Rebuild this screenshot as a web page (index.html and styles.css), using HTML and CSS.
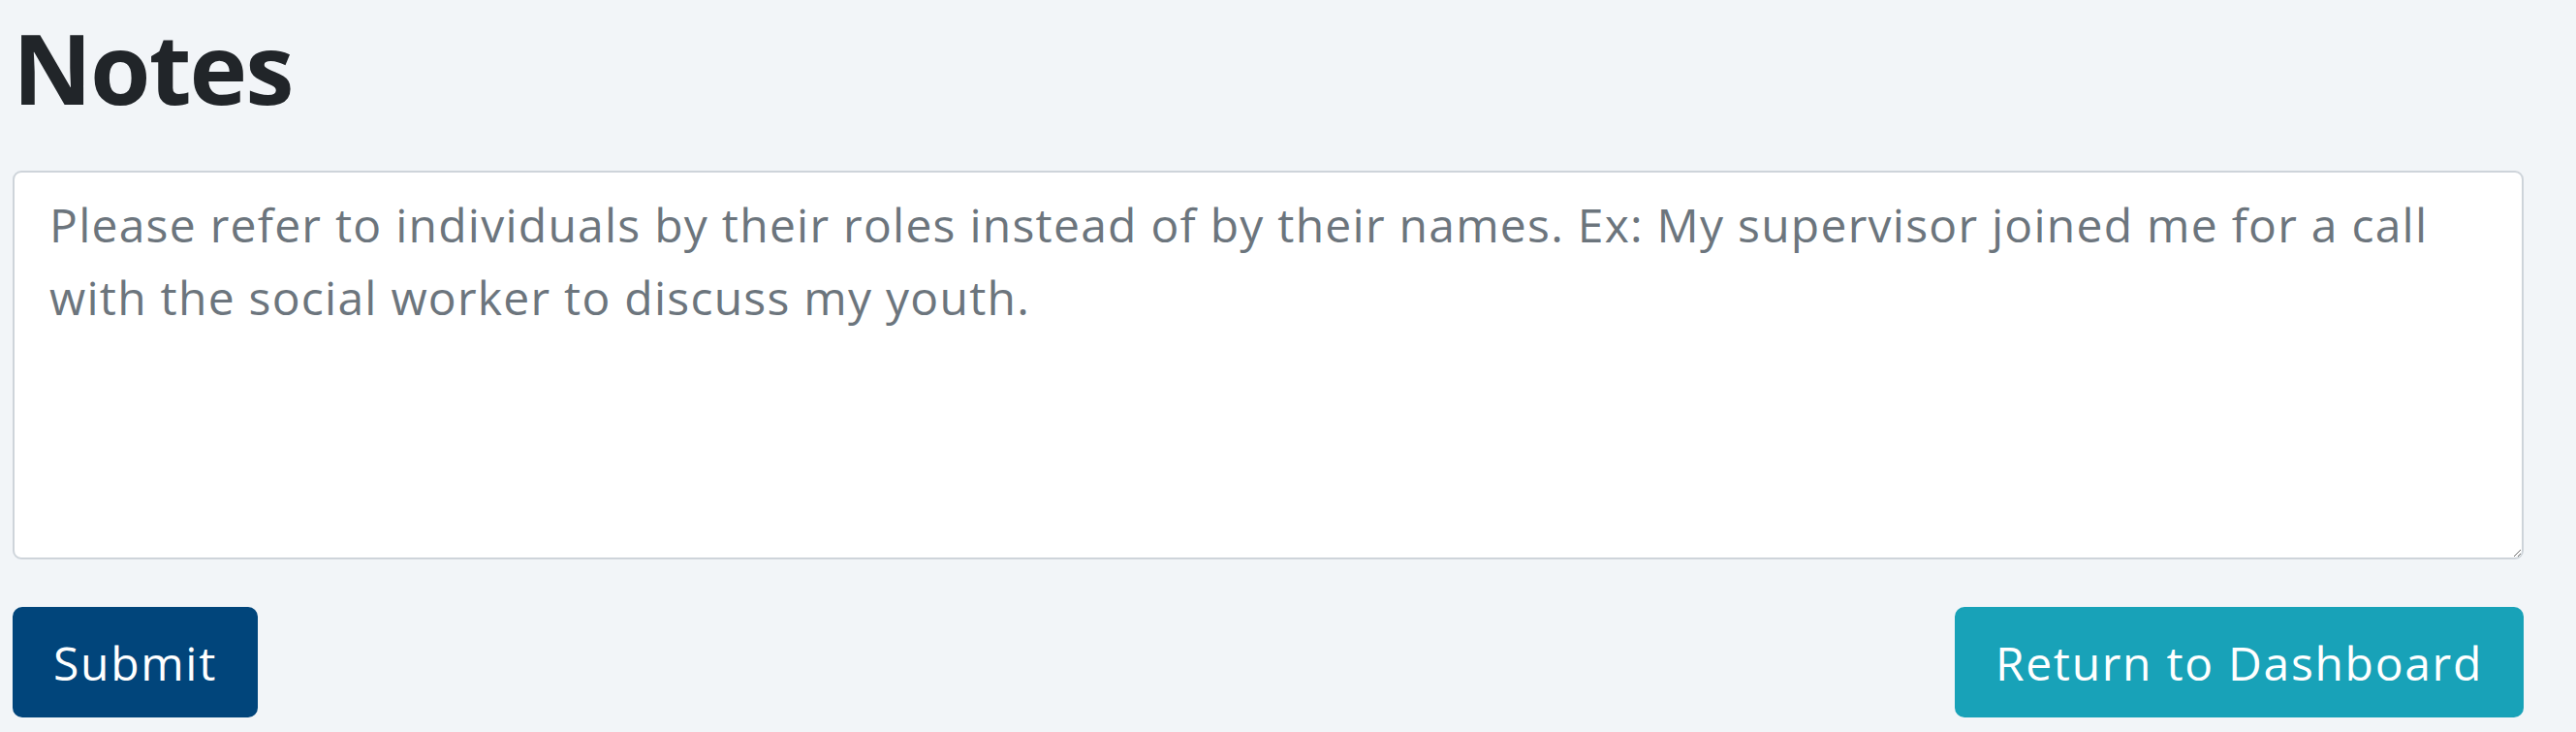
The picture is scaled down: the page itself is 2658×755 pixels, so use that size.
FILE: index.html
```html
<!DOCTYPE html>
<html lang="en">
<head>
<meta charset="utf-8">
<title>Notes</title>
<link rel="stylesheet" href="styles.css">
</head>
<body>
<main class="page">
  <h1 class="title">Notes</h1>
  <form class="notes-form">
    <textarea class="notes-input" placeholder="Please refer to individuals by their roles instead of by their names. Ex: My supervisor joined me for a call with the social worker to discuss my youth."></textarea>
    <div class="actions">
      <button type="submit" class="btn btn-primary">Submit</button>
      <button type="button" class="btn btn-info">Return to Dashboard</button>
    </div>
  </form>
</main>
</body>
</html>
```

FILE: styles.css
```css
html, body {
  margin: 0;
  padding: 0;
  background: #f2f5f8;
}

body {
  font-family: "Open Sans", "Liberation Sans", sans-serif;
  color: #212529;
}

.page {
  padding: 8px 0 0 13px;
  width: 2591px;
}

.title {
  margin: 0 0 45px 0;
  font-size: 101px;
  font-weight: 700;
  line-height: 1.22;
  letter-spacing: -2px;
  color: #212529;
}

.notes-form {
  display: flex;
  flex-direction: column;
}

.notes-input {
  box-sizing: border-box;
  width: 100%;
  height: 401px;
  margin: 0;
  padding: 16px 36px;
  border: 2px solid #ced4da;
  border-radius: 9px;
  background: #fff;
  font-family: "Open Sans", "Liberation Sans", sans-serif;
  font-size: 48px;
  line-height: 75px;
  letter-spacing: 1.25px;
  color: #495057;
  resize: both;
}

.notes-input::placeholder {
  color: #6c757d;
  opacity: 1;
}

.actions {
  display: flex;
  justify-content: space-between;
  margin-top: 49px;
}

.btn {
  box-sizing: border-box;
  height: 114px;
  padding: 0 40px;
  border: 2px solid transparent;
  border-radius: 10px;
  font-family: "Open Sans", "Liberation Sans", sans-serif;
  font-size: 48px;
  line-height: 75px;
  letter-spacing: 1.7px;
  color: #fff;
  cursor: pointer;
}

.btn-primary {
  background: #01457b;
  border-color: #01457b;
}

.btn-info {
  background: #18a2b8;
  border-color: #18a2b8;
}
```
